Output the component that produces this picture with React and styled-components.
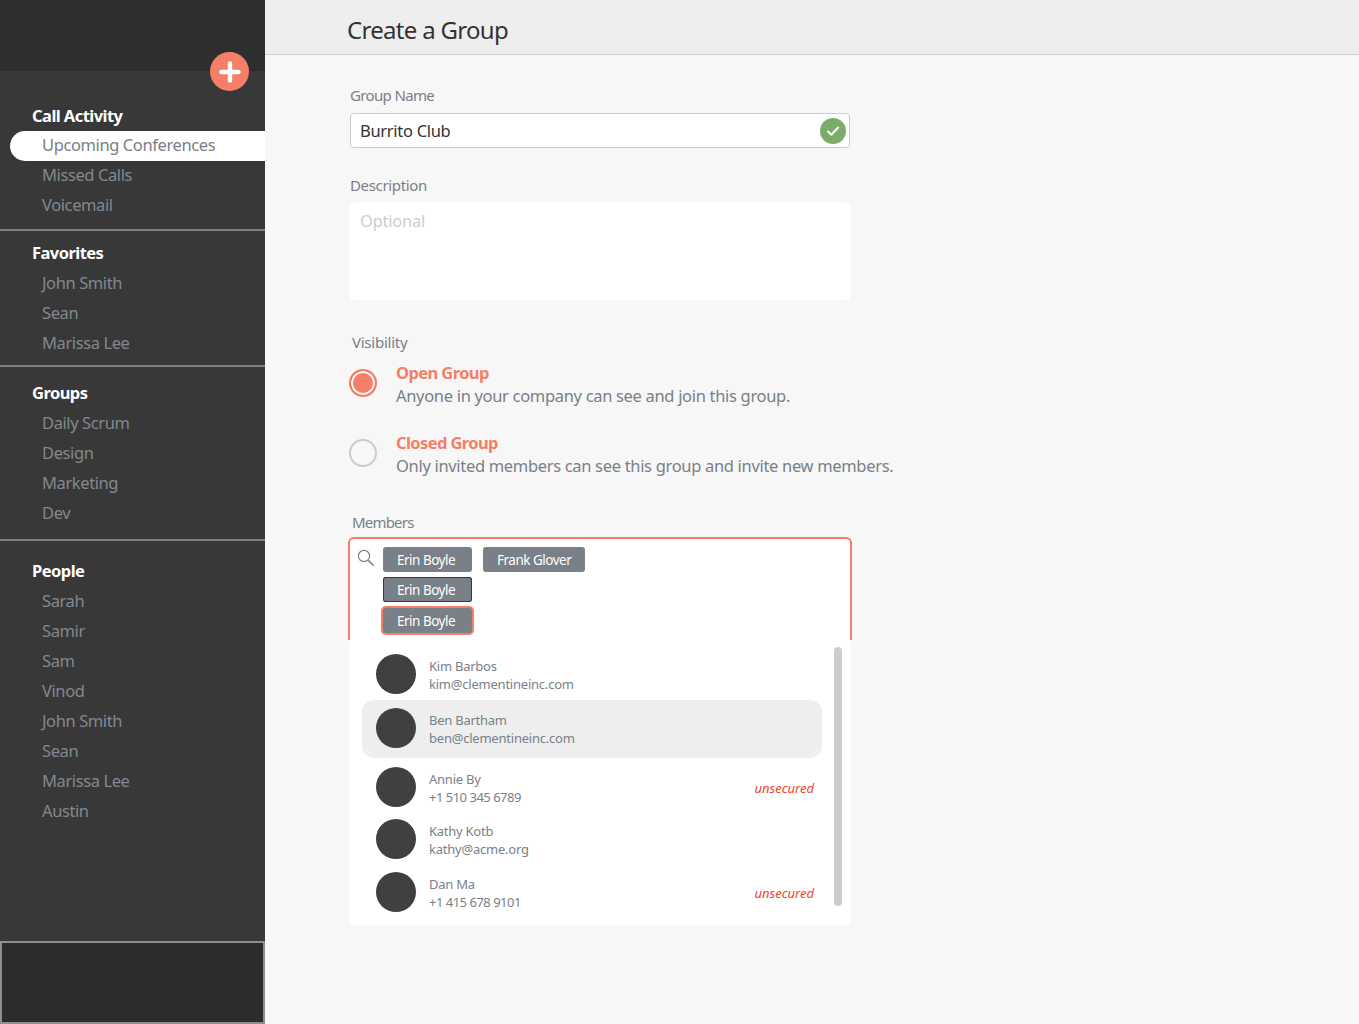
import React from 'react';
import styled, { createGlobalStyle } from 'styled-components';

const CORAL = '#f47e66';
const SLATE = '#7a8087';

const sections = [
  { title: 'Call Activity', top: 30, bottom: 8, items: ['Upcoming Conferences', 'Missed Calls', 'Voicemail'], active: 0, raised: true },
  { title: 'Favorites', top: 7, bottom: 7, items: ['John Smith', 'Sean', 'Marissa Lee'] },
  { title: 'Groups', top: 11, bottom: 11, items: ['Daily Scrum', 'Design', 'Marketing', 'Dev'] },
  { title: 'People', top: 15, bottom: 0, items: ['Sarah', 'Samir', 'Sam', 'Vinod', 'John Smith', 'Sean', 'Marissa Lee', 'Austin'] },
];

const members = [
  { name: 'Kim Barbos', contact: 'kim@clementineinc.com', gap: 0 },
  { name: 'Ben Bartham', contact: 'ben@clementineinc.com', gap: 6, selected: true },
  { name: 'Annie By', contact: '+1 510 345 6789', gap: 9, unsecured: true, phone: true },
  { name: 'Kathy Kotb', contact: 'kathy@acme.org', gap: 12 },
  { name: 'Dan Ma', contact: '+1 415 678 9101', gap: 13, unsecured: true, phone: true },
];

const App = () => {
  return (
    <>
      <GlobalStyle />
      <Page>
        <Sidebar>
          <SidebarTop>
            <AddButton>
              <svg width="22" height="22" viewBox="0 0 22 22">
                <path d="M11 2.5v17M2.5 11h17" stroke="#fff" strokeWidth="4.4" strokeLinecap="round" />
              </svg>
            </AddButton>
          </SidebarTop>
          <SidebarNav>
            {sections.map((section, i) => (
              <NavSection key={section.title} $top={section.top} $bottom={section.bottom} $last={i === sections.length - 1}>
                <NavTitle>{section.title}</NavTitle>
                {section.items.map((item, j) => (
                  <NavItem key={item} $active={section.active === j} $raised={section.raised}>{item}</NavItem>
                ))}
              </NavSection>
            ))}
          </SidebarNav>
          <SidebarFooter />
        </Sidebar>

        <Main>
          <Header>
            <Title>Create a Group</Title>
          </Header>
          <Form>
            <NameLabel>Group Name</NameLabel>
            <NameInput>
              Burrito Club
              <CheckBadge>
                <svg width="14" height="14" viewBox="0 0 14 14">
                  <path d="M2 7.5l3.4 3.3L12 3.6" fill="none" stroke="#fff" strokeWidth="2" strokeLinecap="round" strokeLinejoin="round" />
                </svg>
              </CheckBadge>
            </NameInput>

            <DescriptionLabel>Description</DescriptionLabel>
            <Description>Optional</Description>

            <VisibilityLabel>Visibility</VisibilityLabel>
            <RadioRow>
              <Radio $checked />
              <div>
                <RadioTitle>Open Group</RadioTitle>
                <RadioText>Anyone in your company can see and join this group.</RadioText>
              </div>
            </RadioRow>
            <RadioRow $gap={24}>
              <Radio />
              <div>
                <RadioTitle>Closed Group</RadioTitle>
                <RadioText>Only invited members can see this group and invite new members.</RadioText>
              </div>
            </RadioRow>

            <MembersLabel>Members</MembersLabel>
            <MemberSearch>
              <SearchIcon width="18" height="18" viewBox="0 0 18 18">
                <circle cx="7" cy="7" r="5.6" fill="none" stroke={SLATE} strokeWidth="1.2" />
                <path d="M11.2 11.2l5.6 5.6" stroke={SLATE} strokeWidth="1.6" />
              </SearchIcon>
              <ChipRows>
                <ChipRow>
                  <Chip>Erin Boyle</Chip>
                  <Chip>Frank Glover</Chip>
                </ChipRow>
                <ChipRow>
                  <Chip $variant="hover">Erin Boyle</Chip>
                </ChipRow>
                <ChipRow $top={1}>
                  <Chip $variant="focus">Erin Boyle</Chip>
                </ChipRow>
              </ChipRows>
            </MemberSearch>
            <MemberList>
              <Scrollbar />
              {members.map((m) => (
                <MemberRow key={m.name} $gap={m.gap} $selected={m.selected}>
                  <Avatar />
                  <MemberInfo>
                    <span>{m.name}</span>
                    <Contact $phone={m.phone}>{m.contact}</Contact>
                  </MemberInfo>
                  {m.unsecured && <Unsecured>unsecured</Unsecured>}
                </MemberRow>
              ))}
            </MemberList>
          </Form>
        </Main>
      </Page>
    </>
  );
};

export default App;

// STYLE

const GlobalStyle = createGlobalStyle`
  html, body {
    margin: 0;
    padding: 0;
    background: #f7f7f7;
  }
  body {
    font-family: 'Noto Sans', 'Open Sans', sans-serif;
  }
`;

const Page = styled.div`
  display: flex;
  width: 1359px;
  height: 1024px;
  overflow: hidden;
`;

const Sidebar = styled.aside`
  position: relative;
  display: flex;
  flex-direction: column;
  flex: 0 0 265px;
  background: #383838;
`;

const SidebarTop = styled.div`
  flex: 0 0 71px;
  background: #2e2e2e;
`;

const AddButton = styled.div`
  position: absolute;
  top: 52px;
  left: 210px;
  display: flex;
  align-items: center;
  justify-content: center;
  width: 39px;
  height: 39px;
  border-radius: 50%;
  background: ${CORAL};
`;

const SidebarNav = styled.nav`
  flex: 1;
`;

const NavSection = styled.section`
  padding: ${(p) => p.$top}px 0 ${(p) => p.$bottom}px;
  border-bottom: ${(p) => (p.$last ? 'none' : `2px solid ${SLATE}`)};
`;

const NavTitle = styled.h3`
  margin: 0;
  padding-left: 32px;
  font-size: 16.5px;
  font-weight: 700;
  line-height: 30px;
  letter-spacing: -0.55px;
  color: #fff;
`;

const NavItem = styled.div`
  margin-left: 10px;
  padding: 0 0 ${(p) => (p.$raised ? 2 : 0)}px 32px;
  font-size: 16.5px;
  line-height: ${(p) => (p.$raised ? 28 : 30)}px;
  letter-spacing: -0.4px;
  color: ${(p) => (p.$active ? SLATE : '#83888e')};
  border-radius: ${(p) => (p.$active ? '15px 0 0 15px' : '0')};
  background: ${(p) => (p.$active ? '#fff' : 'transparent')};
`;

const SidebarFooter = styled.div`
  box-sizing: border-box;
  flex: 0 0 83px;
  background: #2c2c2c;
  border: 2px solid #8f8f8f;
`;

const Main = styled.main`
  flex: 1;
  min-width: 0;
`;

const Header = styled.header`
  box-sizing: border-box;
  display: flex;
  align-items: center;
  height: 55px;
  padding: 5px 0 0 82px;
  background: #eee;
  border-bottom: 1px solid #ccc;
`;

const Title = styled.h1`
  margin: 0;
  font-size: 24px;
  font-weight: 400;
  letter-spacing: -0.7px;
  color: #333;
`;

const Form = styled.div`
  width: 500px;
  margin-left: 85px;
  padding-top: 29px;
`;

const Label = styled.div`
  font-size: 15px;
  line-height: 22px;
  letter-spacing: -0.35px;
  color: ${SLATE};
  margin-bottom: 7px;
`;

const NameLabel = styled(Label)`
  letter-spacing: -0.65px;
`;

const DescriptionLabel = styled(Label)`
  margin-top: 26px;
  margin-bottom: 6px;
`;

const VisibilityLabel = styled(Label)`
  margin-top: 31px;
  margin-left: 2px;
  margin-bottom: 8px;
  letter-spacing: -0.25px;
`;

const MembersLabel = styled(Label)`
  margin-top: 34px;
  margin-left: 2px;
  margin-bottom: 4px;
  letter-spacing: -0.8px;
`;

const NameInput = styled.div`
  position: relative;
  box-sizing: border-box;
  height: 35px;
  padding-left: 9px;
  font-size: 16.5px;
  line-height: 33px;
  letter-spacing: -0.3px;
  color: #333;
  background: #fff;
  border: 1px solid #ccc;
  border-radius: 4px;
`;

const CheckBadge = styled.span`
  position: absolute;
  top: 4px;
  right: 3px;
  display: flex;
  align-items: center;
  justify-content: center;
  width: 26px;
  height: 26px;
  border-radius: 50%;
  background: #7cac69;
`;

const Description = styled.div`
  box-sizing: border-box;
  height: 98px;
  padding: 8px 10px;
  font-size: 16.5px;
  line-height: 22px;
  letter-spacing: -0.25px;
  color: #ccc;
  background: #fff;
  border-radius: 4px;
`;

const RadioRow = styled.div`
  display: flex;
  align-items: center;
  gap: 19px;
  width: 600px;
  margin-left: -1px;
  margin-top: ${(p) => p.$gap || 0}px;
`;

const Radio = styled.span`
  box-sizing: border-box;
  flex: 0 0 28px;
  height: 28px;
  margin-top: -2px;
  border-radius: 50%;
  border: 2px solid ${(p) => (p.$checked ? CORAL : '#ccc')};
  background: ${(p) => (p.$checked ? CORAL : 'transparent')};
  box-shadow: ${(p) => (p.$checked ? 'inset 0 0 0 2px #f7f7f7' : 'none')};
`;

const RadioTitle = styled.div`
  font-size: 16.5px;
  font-weight: 700;
  line-height: 23px;
  letter-spacing: -0.6px;
  color: ${CORAL};
`;

const RadioText = styled.div`
  font-size: 16.5px;
  line-height: 23px;
  letter-spacing: -0.32px;
  color: ${SLATE};
`;

const MemberSearch = styled.div`
  box-sizing: border-box;
  display: flex;
  align-items: flex-start;
  gap: 8px;
  width: 504px;
  height: 103px;
  margin-left: -2px;
  padding: 8px 0 0 7px;
  background: #fff;
  border: 2px solid ${CORAL};
  border-bottom: none;
  border-radius: 6px 6px 0 0;
`;

const SearchIcon = styled.svg`
  flex: 0 0 18px;
  margin-top: 2px;
`;

const ChipRows = styled.div`
  display: flex;
  flex-direction: column;
  gap: 5px;
`;

const ChipRow = styled.div`
  display: flex;
  gap: 11px;
  margin-top: ${(p) => p.$top || 0}px;
`;

const Chip = styled.span`
  box-sizing: border-box;
  min-width: 89px;
  height: 25px;
  padding: 0 14px;
  font-size: 13.5px;
  line-height: 27px;
  letter-spacing: -0.5px;
  color: #fff;
  background: ${SLATE};
  border-radius: 3px;
  box-shadow: ${(p) =>
    p.$variant === 'hover'
      ? 'inset 0 0 0 1px #3a3a3a'
      : p.$variant === 'focus'
      ? `0 0 0 2px ${CORAL}`
      : 'none'};
`;

const MemberList = styled.div`
  position: relative;
  box-sizing: border-box;
  height: 285px;
  padding: 14px 28px 0 12px;
  background: #fff;
  border-radius: 0 0 4px 4px;
`;

const Scrollbar = styled.div`
  position: absolute;
  top: 7px;
  right: 8px;
  width: 8px;
  height: 259px;
  background: #ccc;
  border-radius: 4px;
`;

const MemberRow = styled.div`
  display: flex;
  align-items: center;
  gap: 13px;
  padding: ${(p) => (p.$selected ? '8px 8px 10px 14px' : '0 8px 0 14px')};
  margin-top: ${(p) => p.$gap}px;
  background: ${(p) => (p.$selected ? '#eee' : 'transparent')};
  border-radius: 12px;
`;

const Avatar = styled.div`
  flex: 0 0 40px;
  height: 40px;
  border-radius: 50%;
  background: #404040;
`;

const MemberInfo = styled.div`
  display: flex;
  flex: 1;
  flex-direction: column;
  padding-top: 2px;
  font-size: 13px;
  line-height: 18px;
  letter-spacing: -0.25px;
  color: ${SLATE};
`;

const Contact = styled.span`
  letter-spacing: ${(p) => (p.$phone ? '-0.5px' : '-0.22px')};
`;

const Unsecured = styled.span`
  margin-top: 1px;
  font-size: 13px;
  font-style: italic;
  color: #f0432f;
`;
